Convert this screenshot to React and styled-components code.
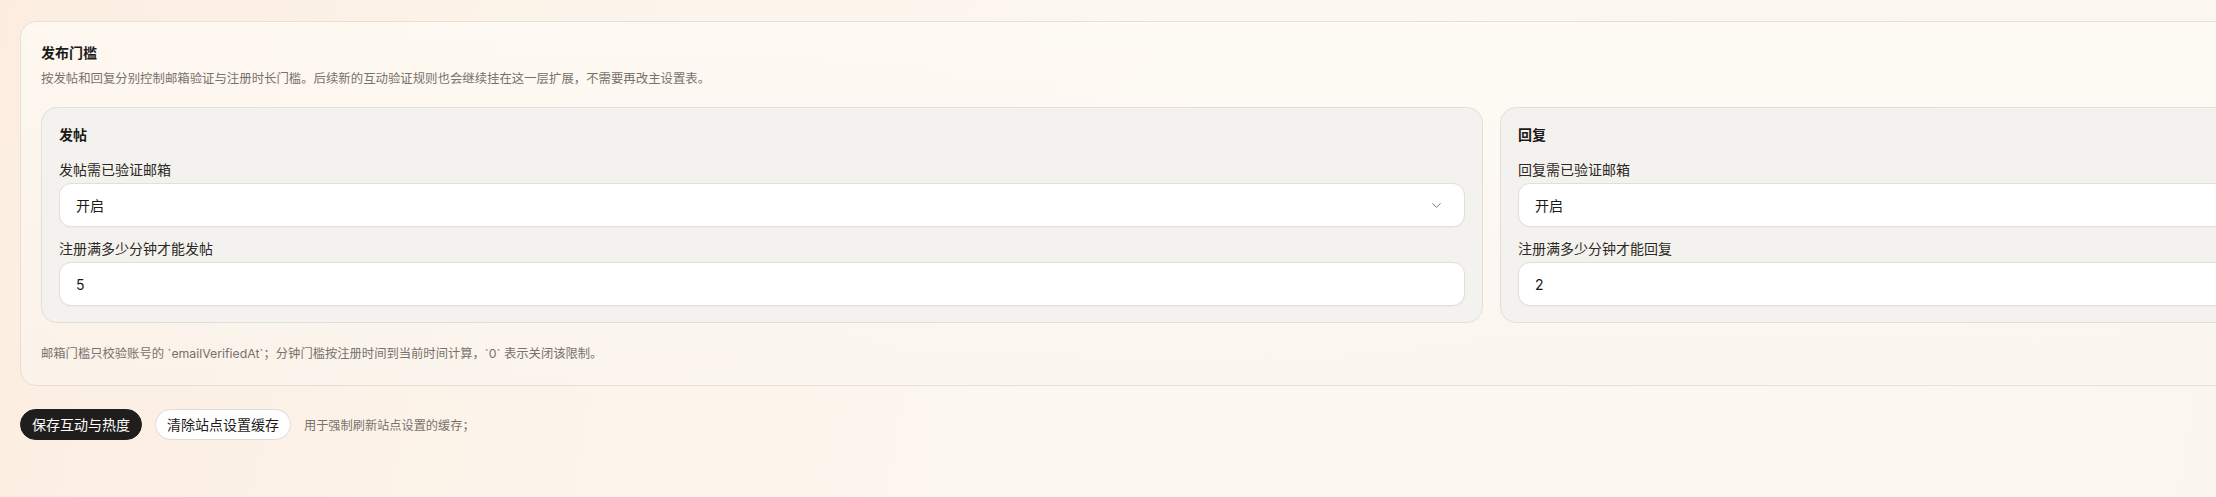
import styled, { createGlobalStyle } from 'styled-components'
import { ChevronDown } from 'lucide-react'

const GlobalStyle = createGlobalStyle`
    html, body {
        margin: 0;
        padding: 0;
    }
    body {
        font-family: Inter, "Noto Sans CJK SC", "Noto Sans", sans-serif;
        color: #1c1a18;
        background: linear-gradient(100deg, #fcede0 0%, #fcf5ec 30%, #fcf8f1 60%, #fbf6ef 100%);
        min-height: 100vh;
    }
`

const Page = styled.main`
    padding: 21px 20px 40px;
    width: 2943px;
`

const Panel = styled.section`
    border: 1px solid #e5e0da;
    border-radius: 16px;
    background: linear-gradient(180deg, rgba(255, 252, 246, 0.7), rgba(250, 245, 238, 0.6));
    padding: 20px 20px 22px;
`

const PanelTitle = styled.h2`
    margin: 0;
    font-size: 14px;
    line-height: 22px;
    font-weight: 700;
`

const PanelDesc = styled.p`
    margin: 6px 0 0;
    font-size: 12.4px;
    line-height: 18px;
    color: #77726c;
`

const Columns = styled.div`
    display: grid;
    grid-template-columns: repeat(2, 1fr);
    gap: 17px;
    margin-top: 19px;
`

const Card = styled.div`
    border: 1px solid #e2ded8;
    border-radius: 16px;
    background: #f4f2ee;
    padding: 16px 17px 16px;
`

const CardTitle = styled.h3`
    margin: 0 0 15px;
    font-size: 14px;
    line-height: 21px;
    font-weight: 700;
`

const Field = styled.label`
    display: flex;
    flex-direction: column;
    gap: 3px;
    & + & {
        margin-top: 12px;
    }
`

const FieldLabel = styled.span`
    font-size: 14px;
    line-height: 20px;
    color: #2b2825;
`

const Control = styled.div`
    display: flex;
    align-items: center;
    justify-content: space-between;
    height: 42px;
    padding: 0 20px 0 16px;
    background: #fff;
    border: 1px solid #e2ded9;
    border-radius: 12px;
    font-size: 14px;
    color: #1c1a18;
    box-shadow: 0 1px 1px rgba(0, 0, 0, 0.03);
    svg {
        color: #77777f;
    }
`

const Note = styled.p`
    margin: 22px 0 0;
    font-size: 12.3px;
    line-height: 18px;
    color: #77726c;
`

const Actions = styled.div`
    display: flex;
    align-items: center;
    gap: 13px;
    margin-top: 23px;
`

const Button = styled.button`
    font-family: inherit;
    font-size: 14px;
    line-height: 17px;
    padding: 6px 11px;
    border-radius: 999px;
    border: 1px solid ${(p) => (p.$dark ? '#1f1e1d' : '#dedad5')};
    background: ${(p) => (p.$dark ? '#1f1e1d' : '#fff')};
    color: ${(p) => (p.$dark ? '#fff' : '#1c1a18')};
    cursor: pointer;
`

const Hint = styled.span`
    font-size: 12.2px;
    color: #77726c;
`

const groups = [
    {
        title: '发帖',
        verify: '发帖需已验证邮箱',
        minutes: '注册满多少分钟才能发帖',
        value: '5',
    },
    {
        title: '回复',
        verify: '回复需已验证邮箱',
        minutes: '注册满多少分钟才能回复',
        value: '2',
    },
]

function App() {
    return (
        <>
            <GlobalStyle />
            <Page>
                <Panel>
                    <PanelTitle>发布门槛</PanelTitle>
                    <PanelDesc>
                        按发帖和回复分别控制邮箱验证与注册时长门槛。后续新的互动验证规则也会继续挂在这一层扩展，不需要再改主设置表。
                    </PanelDesc>
                    <Columns>
                        {groups.map((g) => (
                            <Card key={g.title}>
                                <CardTitle>{g.title}</CardTitle>
                                <Field>
                                    <FieldLabel>{g.verify}</FieldLabel>
                                    <Control>
                                        开启
                                        <ChevronDown size={15} strokeWidth={1.6} />
                                    </Control>
                                </Field>
                                <Field>
                                    <FieldLabel>{g.minutes}</FieldLabel>
                                    <Control>{g.value}</Control>
                                </Field>
                            </Card>
                        ))}
                    </Columns>
                    <Note>
                        邮箱门槛只校验账号的 `emailVerifiedAt`；分钟门槛按注册时间到当前时间计算，`0` 表示关闭该限制。
                    </Note>
                </Panel>
                <Actions>
                    <Button $dark>保存互动与热度</Button>
                    <Button>清除站点设置缓存</Button>
                    <Hint>用于强制刷新站点设置的缓存；</Hint>
                </Actions>
            </Page>
        </>
    )
}

export default App
